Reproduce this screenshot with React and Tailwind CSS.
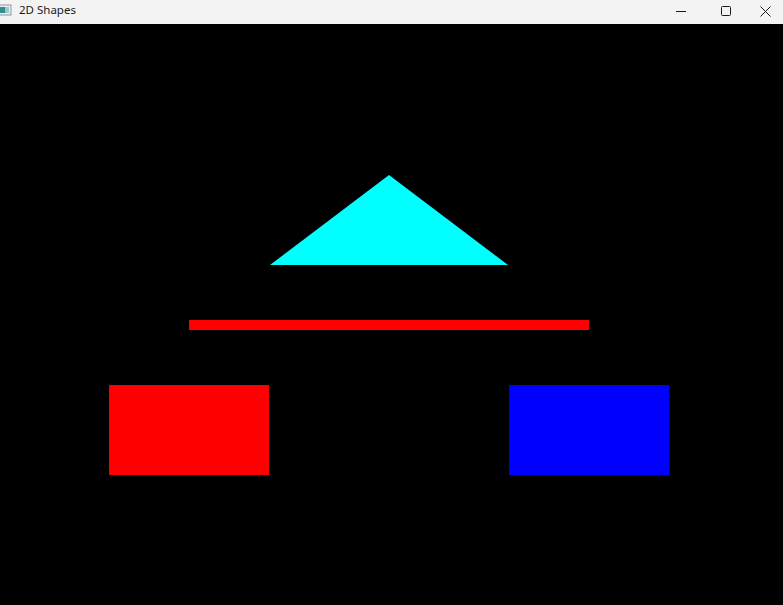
import React from "react";

// window chrome buttons
const Minimize = () => (
  <svg width="10" height="10" viewBox="0 0 10 10">
    <path d="M0 5.5h10" stroke="#1a1a1a" strokeWidth="1" />
  </svg>
);

const Maximize = () => (
  <svg width="10" height="10" viewBox="0 0 10 10">
    <rect x="0.5" y="0.5" width="9" height="9" rx="1" fill="none" stroke="#1a1a1a" strokeWidth="1" />
  </svg>
);

const Close = () => (
  <svg width="11" height="11" viewBox="0 0 11 11">
    <path d="M0.5 0.5l10 10M10.5 0.5l-10 10" stroke="#1a1a1a" strokeWidth="1" />
  </svg>
);

const AppIcon = () => (
  <svg width="12" height="12" viewBox="0 0 12 12">
    <rect x="-2" y="1" width="13" height="10" fill="#e8eef0" stroke="#8a9aa0" strokeWidth="1" />
    <rect x="-1" y="3" width="6" height="6" fill="#2f8f8a" />
    <rect x="5" y="3" width="4" height="6" fill="#9ec9c6" />
  </svg>
);

const App = () => {
  return (
    <div className="w-[783px] h-[605px] flex flex-col bg-black overflow-hidden" style={{ fontFamily: '"Noto Sans", "Open Sans", sans-serif' }}>
      <div className="h-[24px] bg-[#f3f3f3] flex items-center shrink-0">
        <div className="w-[19px] flex items-center mb-[4px]">
          <AppIcon />
        </div>
        <span className="text-[11.5px] text-[#1a1a1a] leading-none mb-[4px]">2D Shapes</span>
        <div className="ml-auto flex h-full pb-[2px]">
          <div className="w-[45px] flex items-center justify-center"><Minimize /></div>
          <div className="w-[45px] flex items-center justify-center"><Maximize /></div>
          <div className="w-[35px] flex items-center justify-center"><Close /></div>
        </div>
      </div>
      <svg width="783" height="581" viewBox="0 0 783 581" className="block" shapeRendering="crispEdges">
        <rect width="783" height="581" fill="#000" />
        <polygon points="389,151 508,241 270,241" fill="#00ffff" shapeRendering="auto" />
        <rect x="189" y="296" width="400" height="10" fill="#ff0000" />
        <rect x="109" y="361" width="160" height="90" fill="#ff0000" />
        <rect x="509" y="361" width="160" height="90" fill="#0000ff" />
      </svg>
    </div>
  );
};

export default App;
